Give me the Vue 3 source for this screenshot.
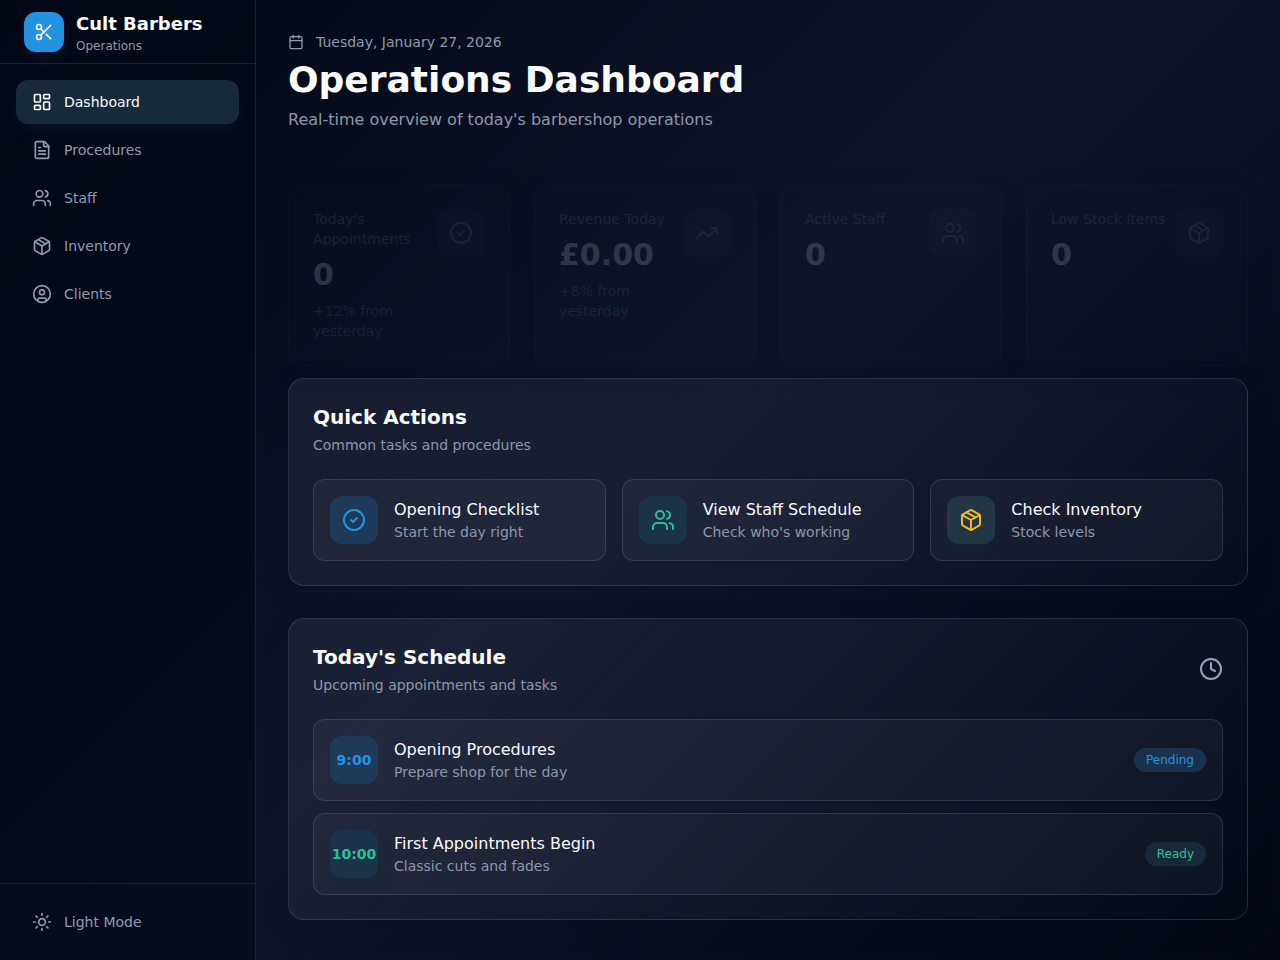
<script setup>
import { ref } from 'vue'

// lucide 图标，24x24 描边
const icons = {
  scissors: '<circle cx="6" cy="6" r="3"/><path d="M8.12 8.12 12 12"/><path d="M20 4 8.12 15.88"/><circle cx="6" cy="18" r="3"/><path d="M14.8 14.8 20 20"/>',
  dashboard: '<rect width="7" height="9" x="3" y="3" rx="1"/><rect width="7" height="5" x="14" y="3" rx="1"/><rect width="7" height="9" x="14" y="12" rx="1"/><rect width="7" height="5" x="3" y="16" rx="1"/>',
  file: '<path d="M15 2H6a2 2 0 0 0-2 2v16a2 2 0 0 0 2 2h12a2 2 0 0 0 2-2V7Z"/><path d="M14 2v4a2 2 0 0 0 2 2h4"/><path d="M10 9H8"/><path d="M16 13H8"/><path d="M16 17H8"/>',
  users: '<path d="M16 21v-2a4 4 0 0 0-4-4H6a4 4 0 0 0-4 4v2"/><circle cx="9" cy="7" r="4"/><path d="M22 21v-2a4 4 0 0 0-3-3.87"/><path d="M16 3.13a4 4 0 0 1 0 7.75"/>',
  box: '<path d="M11 21.73a2 2 0 0 0 2 0l7-4A2 2 0 0 0 21 16V8a2 2 0 0 0-1-1.73l-7-4a2 2 0 0 0-2 0l-7 4A2 2 0 0 0 3 8v8a2 2 0 0 0 1 1.73z"/><path d="M12 22V12"/><path d="m3.3 7 8.7 5 8.7-5"/><path d="m7.5 4.27 9 5.15"/>',
  client: '<circle cx="12" cy="12" r="10"/><circle cx="12" cy="10" r="3"/><path d="M7 20.662V19a2 2 0 0 1 2-2h6a2 2 0 0 1 2 2v1.662"/>',
  sun: '<circle cx="12" cy="12" r="4"/><path d="M12 2v2"/><path d="M12 20v2"/><path d="m4.93 4.93 1.41 1.41"/><path d="m17.66 17.66 1.41 1.41"/><path d="M2 12h2"/><path d="M20 12h2"/><path d="m6.34 17.66-1.41 1.41"/><path d="m19.07 4.93-1.41 1.41"/>',
  calendar: '<path d="M8 2v4"/><path d="M16 2v4"/><rect width="18" height="18" x="3" y="4" rx="2"/><path d="M3 10h18"/>',
  check: '<circle cx="12" cy="12" r="10"/><path d="m9 12 2 2 4-4"/>',
  trend: '<path d="M22 7 13.5 15.5 8.5 10.5 2 17"/><path d="M16 7h6v6"/>',
  clock: '<circle cx="12" cy="12" r="10"/><path d="M12 6v6l4 2"/>',
}

const active = ref('Dashboard')

const nav = [
  { label: 'Dashboard', icon: 'dashboard' },
  { label: 'Procedures', icon: 'file' },
  { label: 'Staff', icon: 'users' },
  { label: 'Inventory', icon: 'box' },
  { label: 'Clients', icon: 'client' },
]

const stats = [
  { label: "Today's Appointments", value: '0', change: '+12% from yesterday', icon: 'check' },
  { label: 'Revenue Today', value: '£0.00', change: '+8% from yesterday', icon: 'trend' },
  { label: 'Active Staff', value: '0', icon: 'users' },
  { label: 'Low Stock Items', value: '0', icon: 'box' },
]

const actions = [
  { title: 'Opening Checklist', sub: 'Start the day right', icon: 'check', tone: 'blue' },
  { title: 'View Staff Schedule', sub: "Check who's working", icon: 'users', tone: 'green' },
  { title: 'Check Inventory', sub: 'Stock levels', icon: 'box', tone: 'amber' },
]

const schedule = [
  { time: '9:00', title: 'Opening Procedures', sub: 'Prepare shop for the day', status: 'Pending', tone: 'blue' },
  { time: '10:00', title: 'First Appointments Begin', sub: 'Classic cuts and fades', status: 'Ready', tone: 'green' },
]
</script>

<template>
  <div class="layout">
    <aside class="sidebar">
      <div class="brand">
        <div class="brand-mark">
          <svg class="icon md" viewBox="0 0 24 24" v-html="icons.scissors"></svg>
        </div>
        <div>
          <div class="brand-name">Cult Barbers</div>
          <div class="brand-sub">Operations</div>
        </div>
      </div>

      <nav class="nav">
        <button
          v-for="item in nav"
          :key="item.label"
          type="button"
          class="nav-item"
          :class="{ active: active === item.label }"
          @click="active = item.label"
        >
          <svg class="icon md" viewBox="0 0 24 24" v-html="icons[item.icon]"></svg>
          <span>{{ item.label }}</span>
        </button>
      </nav>

      <div class="sidebar-footer">
        <button type="button" class="nav-item">
          <svg class="icon md" viewBox="0 0 24 24" v-html="icons.sun"></svg>
          <span>Light Mode</span>
        </button>
      </div>
    </aside>

    <main class="main">
      <header class="page-header">
        <div class="date">
          <svg class="icon sm" viewBox="0 0 24 24" v-html="icons.calendar"></svg>
          <span>Tuesday, January 27, 2026</span>
        </div>
        <h1>Operations Dashboard</h1>
        <p>Real-time overview of today's barbershop operations</p>
      </header>

      <section class="stats">
        <div class="stat" v-for="stat in stats" :key="stat.label">
          <div class="stat-body">
            <div class="stat-label">{{ stat.label }}</div>
            <div class="stat-value">{{ stat.value }}</div>
            <div v-if="stat.change" class="stat-change">{{ stat.change }}</div>
          </div>
          <div class="stat-icon">
            <svg class="icon lg" viewBox="0 0 24 24" v-html="icons[stat.icon]"></svg>
          </div>
        </div>
      </section>

      <section class="panel">
        <div class="panel-head">
          <div>
            <h2>Quick Actions</h2>
            <p>Common tasks and procedures</p>
          </div>
        </div>
        <div class="actions">
          <div class="row" v-for="a in actions" :key="a.title">
            <div class="tile" :class="a.tone">
              <svg class="icon lg" viewBox="0 0 24 24" v-html="icons[a.icon]"></svg>
            </div>
            <div class="row-text">
              <div class="row-title">{{ a.title }}</div>
              <div class="row-sub">{{ a.sub }}</div>
            </div>
          </div>
        </div>
      </section>

      <section class="panel">
        <div class="panel-head">
          <div>
            <h2>Today's Schedule</h2>
            <p>Upcoming appointments and tasks</p>
          </div>
          <svg class="icon lg muted" viewBox="0 0 24 24" v-html="icons.clock"></svg>
        </div>
        <div class="schedule">
          <div class="row" v-for="s in schedule" :key="s.time">
            <div class="tile" :class="s.tone">{{ s.time }}</div>
            <div class="row-text">
              <div class="row-title">{{ s.title }}</div>
              <div class="row-sub">{{ s.sub }}</div>
            </div>
            <span class="badge" :class="s.tone">{{ s.status }}</span>
          </div>
        </div>
      </section>
    </main>
  </div>
</template>

<style>
body {
  margin: 0;
  background: #020817;
  overflow: hidden;
}
</style>

<style scoped>
* { box-sizing: border-box; }

.layout {
  display: flex;
  height: 100vh;
  overflow: hidden;
  font-family: "DejaVu Sans", sans-serif;
  font-size: 14px;
  line-height: 20px;
  color: #fafafa;
  background: linear-gradient(135deg, #020713 0%, #0f1529 50%, #020713 100%);
}

.icon {
  flex-shrink: 0;
  display: block;
  fill: none;
  stroke: currentColor;
  stroke-width: 2;
  stroke-linecap: round;
  stroke-linejoin: round;
}
.icon.sm { width: 16px; height: 16px; }
.icon.md { width: 20px; height: 20px; }
.icon.lg { width: 24px; height: 24px; }
.icon.muted { color: #98a4b5; }

.sidebar {
  display: flex;
  flex-direction: column;
  width: 256px;
  flex-shrink: 0;
  border-right: 1px solid #1b2132;
  background: rgba(3, 8, 22, 0.6);
}
.brand {
  display: flex;
  align-items: center;
  gap: 12px;
  height: 64px;
  padding: 0 24px;
  border-bottom: 1px solid #1b2132;
}
.brand-mark {
  display: flex;
  align-items: center;
  justify-content: center;
  width: 40px;
  height: 40px;
  border-radius: 12px;
  background: #2393e1;
  box-shadow: 0 10px 15px -3px rgba(50, 70, 140, 0.2);
}
.brand-name {
  font-size: 18px;
  line-height: 28px;
  font-weight: 700;
}
.brand-sub {
  font-size: 12px;
  line-height: 16px;
  color: #8c98a9;
}

.nav {
  flex: 1;
  display: flex;
  flex-direction: column;
  gap: 4px;
  padding: 16px;
}
.nav-item {
  display: flex;
  align-items: center;
  gap: 12px;
  width: 100%;
  height: 44px;
  padding: 0 16px;
  border: none;
  border-radius: 12px;
  background: transparent;
  color: #8f9bac;
  font: inherit;
  text-align: left;
}
.nav-item.active {
  background: #172a3a;
  color: #fafafa;
  box-shadow: 0 10px 15px -3px rgba(50, 60, 120, 0.16);
}
.sidebar-footer {
  padding: 16px;
  border-top: 1px solid #1b2132;
}

.main {
  flex: 1;
  min-width: 0;
  display: flex;
  flex-direction: column;
  gap: 32px;
  padding: 32px;
}
.date {
  display: flex;
  align-items: center;
  gap: 12px;
  margin-bottom: 8px;
  color: #8f9bac;
}
h1 {
  margin: 0 0 8px;
  font-size: 36px;
  line-height: 40px;
  font-weight: 700;
}
.page-header p {
  margin: 0;
  font-size: 16px;
  line-height: 24px;
  color: #8c98a9;
}

/* 入场动画的起始状态：下移并几乎透明 */
.stats {
  display: grid;
  grid-template-columns: repeat(4, minmax(0, 1fr));
  gap: 24px;
  transform: translateY(20px);
}
.stat {
  display: flex;
  align-items: flex-start;
  justify-content: space-between;
  padding: 24px;
  border: 1px solid rgba(180, 205, 235, 0.14);
  border-radius: 16px;
  box-shadow: 0 8px 24px rgba(0, 0, 0, 0.2);
  opacity: 0.18;
}
.stat-body {
  flex: 1;
  min-width: 0;
}
.stat-label { color: #6b7389; }
.stat-value {
  margin-top: 8px;
  font-size: 30px;
  line-height: 36px;
  font-weight: 700;
  color: #c3dfe4;
}
.stat-change {
  margin-top: 8px;
  color: #40788c;
}
.stat-icon {
  display: flex;
  align-items: center;
  justify-content: center;
  width: 48px;
  height: 48px;
  flex-shrink: 0;
  border-radius: 12px;
  background: rgba(110, 130, 170, 0.17);
  color: #3a8798;
}

.panel {
  padding: 24px;
  border: 1px solid rgba(150, 190, 205, 0.16);
  border-radius: 16px;
  background: linear-gradient(135deg, rgba(215, 228, 255, 0.07), rgba(215, 228, 255, 0.01));
  box-shadow: 0 8px 32px rgba(0, 0, 0, 0.1);
}
.panel-head {
  display: flex;
  align-items: center;
  justify-content: space-between;
  margin-bottom: 24px;
}
h2 {
  margin: 0 0 4px;
  font-size: 20px;
  line-height: 28px;
  font-weight: 700;
}
.panel-head p {
  margin: 0;
  color: #8c98a9;
}

.actions {
  display: grid;
  grid-template-columns: repeat(3, minmax(0, 1fr));
  gap: 16px;
}
.schedule {
  display: flex;
  flex-direction: column;
  gap: 12px;
}
.row {
  display: flex;
  align-items: center;
  gap: 16px;
  padding: 16px;
  overflow: hidden;
  border: 1px solid rgba(150, 190, 205, 0.17);
  border-radius: 12px;
  background: rgba(225, 228, 255, 0.042);
}
.row-text {
  flex: 1;
  min-width: 0;
}
.row-title {
  font-size: 16px;
  line-height: 24px;
}
.row-sub { color: #8c98a9; }

.tile {
  display: flex;
  align-items: center;
  justify-content: center;
  width: 48px;
  height: 48px;
  flex-shrink: 0;
  border-radius: 12px;
  font-weight: 700;
}
.tile.blue {
  background: #1f3a59;
  color: #2393e1;
}
.tile.green {
  background: #1a334a;
  color: #30c08d;
  box-shadow: 0 10px 15px -3px rgba(12, 42, 56, 0.6);
}
.tile.amber {
  background: #213844;
  color: #f5b728;
  box-shadow: 0 10px 15px -3px rgba(12, 42, 56, 0.6);
}

.badge {
  padding: 4px 12px;
  border-radius: 999px;
  font-size: 12px;
  line-height: 16px;
}
.badge.blue {
  background: #1a324c;
  color: #2393e1;
}
.badge.green {
  background: #172a3a;
  color: #30c08d;
}
</style>
